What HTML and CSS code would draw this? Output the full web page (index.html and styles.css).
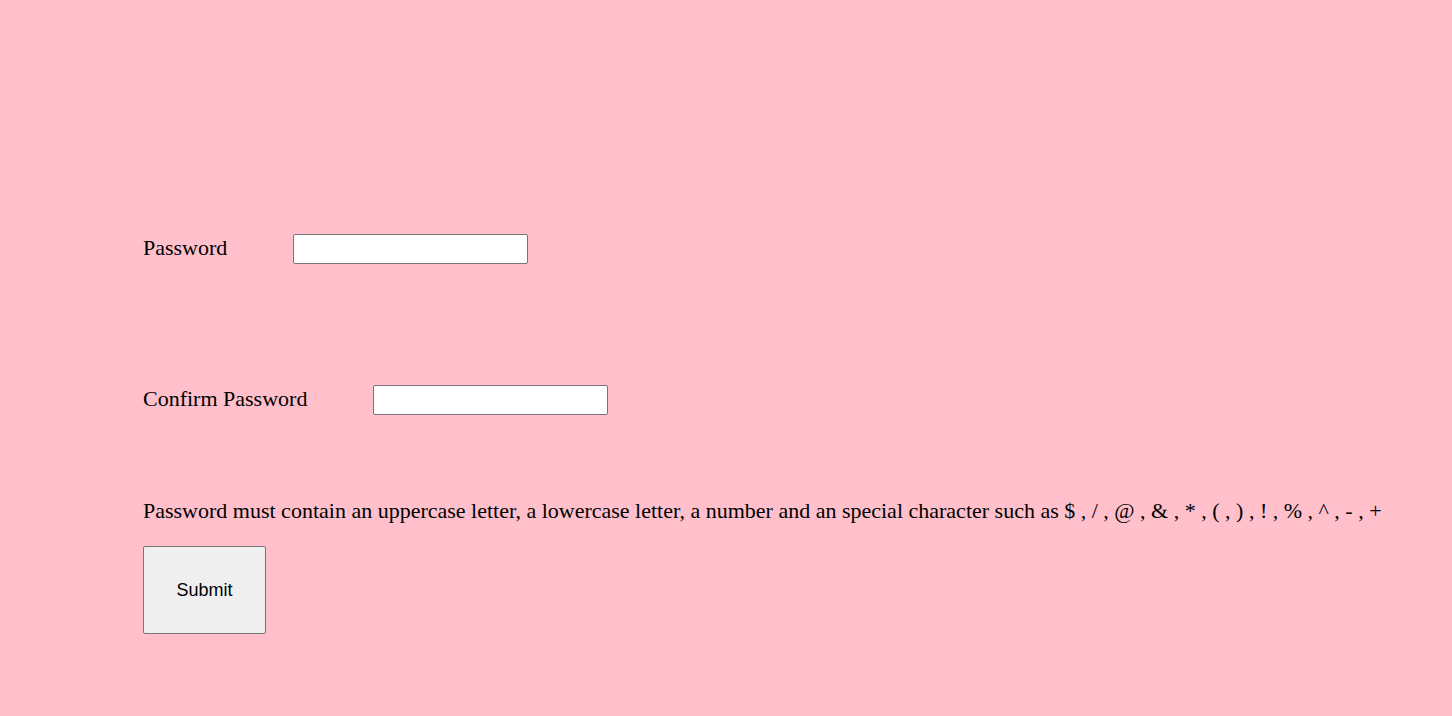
FILE: index.html
```html
<!DOCTYPE html>
<html>
<head>
<meta charset="utf-8">
<link rel="stylesheet" href="styles.css">
</head>
<body>
<form class="page">
  <div class="row">
    <label class="label">Password</label>
    <input class="field" type="password">
  </div>
  <div class="row row-second">
    <label class="label">Confirm Password</label>
    <input class="field" type="password">
  </div>
  <p class="note">Password must contain an uppercase letter, a lowercase letter, a number and an special character such as $ , / , @ , &amp; , * , ( , ) , ! , % , ^ , - , +</p>
  <button class="submit" type="button">Submit</button>
</form>
</body>
</html>
```
FILE: styles.css
```css
html, body {
  margin: 0;
  padding: 0;
  background: #ffc0cb;
}
body {
  font-family: "Liberation Serif", "Times New Roman", serif;
  font-size: 22px;
  color: #000;
}
.page {
  padding: 234px 0 0 143px;
  display: flex;
  flex-direction: column;
  align-items: flex-start;
}
.row {
  display: flex;
  align-items: center;
  height: 30px;
}
.row-second {
  margin-top: 121px;
}
.label {
  line-height: 25px;
  padding-bottom: 3px;
  margin-right: 66px;
}
.field {
  box-sizing: border-box;
  width: 235px;
  height: 30px;
  margin: 0;
  border: 1px solid #767676;
  border-radius: 2px;
  background: #fff;
}
.note {
  margin: 83px 0 0;
  line-height: 25px;
  white-space: nowrap;
}
.submit {
  margin-top: 23px;
  box-sizing: border-box;
  width: 123px;
  height: 88px;
  background: #efefef;
  border: 1px solid #767676;
  border-radius: 2px;
  font-family: "Liberation Sans", Arial, sans-serif;
  font-size: 18px;
  color: #000;
  padding: 0;
}
```
